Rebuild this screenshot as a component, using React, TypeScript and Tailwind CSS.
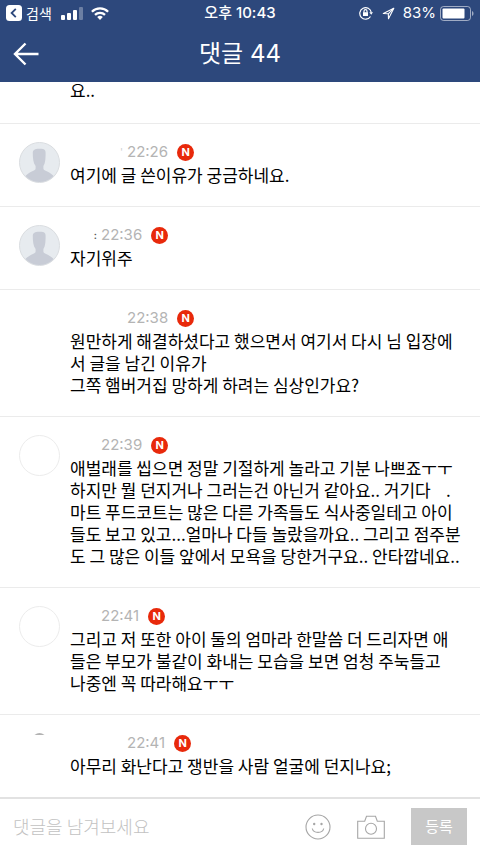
import React from "react";

type AvatarKind = "person" | "empty" | "none" | "edge";

interface Comment {
  id: number;
  avatar: AvatarKind;
  name?: string;
  wide: boolean;
  time: string;
  lines: string[];
}

const comments: Comment[] = [
  { id: 1, avatar: "person", name: "'", wide: true, time: "22:26", lines: ["여기에 글 쓴이유가 궁금하네요."] },
  { id: 2, avatar: "person", name: ":", wide: false, time: "22:36", lines: ["자기위주"] },
  {
    id: 3,
    avatar: "none",
    wide: true,
    time: "22:38",
    lines: ["원만하게 해결하셨다고 했으면서 여기서 다시 님 입장에", "서 글을 남긴 이유가", "그쪽 햄버거집 망하게 하려는 심상인가요?"],
  },
  {
    id: 4,
    avatar: "empty",
    wide: false,
    time: "22:39",
    lines: [
      "애벌래를 씹으면 정말 기절하게 놀라고 기분 나쁘죠ㅜㅜ",
      "하지만 뭘 던지거나 그러는건 아닌거 같아요.. 거기다    .",
      "마트 푸드코트는 많은 다른 가족들도 식사중일테고 아이",
      "들도 보고 있고...얼마나 다들 놀랐을까요.. 그리고 점주분",
      "도 그 많은 이들 앞에서 모욕을 당한거구요.. 안타깝네요..",
    ],
  },
  {
    id: 5,
    avatar: "empty",
    wide: false,
    time: "22:41",
    lines: ["그리고 저 또한 아이 둘의 엄마라 한말씀 더 드리자면 애", "들은 부모가 불같이 화내는 모습을 보면 엄청 주눅들고", "나중엔 꼭 따라해요ㅜㅜ"],
  },
  { id: 6, avatar: "edge", wide: true, time: "22:41", lines: ["아무리 화난다고 쟁반을 사람 얼굴에 던지나요;"] },
];

function Avatar({ kind }: { kind: AvatarKind }) {
  return (
    <div className="h-[41px] w-[41px] shrink-0">
      {kind === "person" && (
        <svg viewBox="0 0 41 41" className="h-full w-full">
          <circle cx="20.5" cy="20.5" r="20" fill="#e7ebef" stroke="#dadde0" />
          <path
            d="M13.800 11C13.800 8 16 6.800 20 6.800s6.600.2 6.600 4.200c0 5-.1 10-2.200 13v2.500c0 1 .8 1.600 2.200 2.300 3 1.400 6 3 8 5.200A19.500 19.500 0 0 1 6.400 34c2-2.200 5-3.800 8-5.200 1.400-.7 2.200-1.300 2.200-2.300V24c-2.400-3-2.800-8-2.800-13z"
            fill="#c8ccd6"
          />
        </svg>
      )}
      {kind === "empty" && <div className="h-full w-full rounded-full border border-[#ececec]" />}
      {kind === "edge" && (
        <svg viewBox="0 0 41 41" className="h-full w-full">
          <path d="M15.500 1.500q5-2 10 0z" fill="#666" />
        </svg>
      )}
    </div>
  );
}

function NewBadge() {
  return (
    <span className="flex h-[17px] w-[17px] items-center justify-center rounded-full bg-[#e8290b] text-[11px] leading-none font-bold text-white">
      N
    </span>
  );
}

function CommentRow({ comment }: { comment: Comment }) {
  return (
    <li className="border-t border-[#ebebeb] pt-[18px] pr-3 pb-5 pl-[19px]">
      <article className="flex gap-[10px]">
        <Avatar kind={comment.avatar} />
        <div className="min-w-0 flex-1">
          <div className="flex h-5 items-center font-['Inter',sans-serif] text-[15px] text-[#b4b4b4]">
            <span
              className={
                comment.wide
                  ? "w-[57px] pr-1 text-right text-[10px] text-[#d0d0d0]"
                  : "w-[31px] pr-1 text-right text-[10px] font-semibold text-[#555]"
              }
            >
              {comment.name}
            </span>
            <time className="mr-[9px]">{comment.time}</time>
            <NewBadge />
          </div>
          <p className="mt-[2px] text-[17px] leading-[22px] whitespace-pre text-black">{comment.lines.join("\n")}</p>
        </div>
      </article>
    </li>
  );
}

function StatusBar() {
  return (
    <div className="grid h-[26px] grid-cols-[1fr_auto_1fr] items-center px-[6px] font-['Inter','Noto_Sans_CJK_KR',sans-serif] text-[15px]">
      <div className="flex items-center">
        <svg viewBox="0 0 16 16" className="h-4 w-4">
          <rect width="16" height="16" rx="3.500" fill="#fff" />
          <path d="M9.800 3.800 5.600 8l4.200 4.200" fill="none" stroke="#2d487c" strokeWidth="1.800" />
        </svg>
        <span className="ml-1 text-[14px]">검색</span>
        <svg viewBox="0 0 22 13" className="ml-[9px] h-[13px] w-[22px]" fill="#fff">
          <rect x="0" y="8" width="4" height="5" rx="1" />
          <rect x="6" y="6" width="4" height="7" rx="1" />
          <rect x="12" y="3" width="4" height="10" rx="1" />
          <rect x="18" y="0" width="4" height="13" rx="1" opacity=".3" />
        </svg>
        <svg viewBox="0 0 18 13" className="ml-2 h-[13px] w-[18px]" fill="none" stroke="#fff" strokeWidth="2.300">
          <path d="M.9 4.700a11.500 11.500 0 0 1 16.200 0" />
          <path d="M4 7.900a7.100 7.100 0 0 1 10 0" />
          <path d="m9 13-2.800-2.900a4 4 0 0 1 5.600 0z" fill="#fff" stroke="none" />
        </svg>
      </div>
      <span className="font-medium">오후 10:43</span>
      <div className="flex items-center justify-end">
        <svg viewBox="0 0 14 14" className="h-[14px] w-[14px]" fill="none" stroke="#fff" strokeWidth="1.200">
          <path d="M11.500 10.500A5.800 5.800 0 1 1 12.300 6.500" />
          <path d="M10.300 6.200h3.700l-1.800 2.500z" fill="#fff" stroke="none" />
          <rect x="4" y="6.200" width="5" height="3.800" fill="#fff" stroke="none" />
          <path d="M5 6.500V5.200a1.500 1.500 0 0 1 3 0v1.300" />
        </svg>
        <svg viewBox="0 0 13 13" className="ml-[9px] h-[13px] w-[13px]" fill="none" stroke="#fff" strokeWidth="1.100">
          <path d="M11.800 1.200 1.300 6.500l5 .3.200 5z" strokeLinejoin="round" />
          <path d="m6.300 6.800 5.500-5.600" />
        </svg>
        <span className="ml-2">83%</span>
        <svg viewBox="0 0 34 15" className="ml-1 h-[15px] w-[34px]">
          <rect x=".5" y=".5" width="30" height="14" rx="3" fill="none" stroke="#fff" opacity=".55" />
          <rect x="2.500" y="2.500" width="22" height="10" rx="1" fill="#fff" />
          <path d="M32 5c2 .8 2 4.200 0 5z" fill="#fff" opacity=".55" />
        </svg>
      </div>
    </div>
  );
}

export default function App() {
  return (
    <div className="flex h-screen flex-col bg-white font-['Noto_Sans_CJK_KR',sans-serif]">
      <header className="shrink-0 bg-[#2d487c] text-white">
        <StatusBar />
        <div className="grid h-14 grid-cols-[1fr_auto_1fr] items-center px-[13px]">
          <button type="button" aria-label="뒤로" className="h-6 w-[27px]">
            <svg viewBox="0 0 27 24" className="h-full w-full" fill="none" stroke="#fff" strokeWidth="2.400">
              <path d="M12.500 1.500 2 12l10.500 10.500M2 12h23.500" />
            </svg>
          </button>
          <h1 className="font-['Inter','Noto_Sans_CJK_KR',sans-serif] text-[24px] leading-8 font-normal">댓글 44</h1>
        </div>
      </header>

      <main className="flex min-h-0 flex-1 flex-col justify-end overflow-hidden">
        <p className="shrink-0 pb-[22px] pl-[70px] text-[17px] leading-[22px] text-black">요..</p>
        <ul className="shrink-0">
          {comments.map((comment) => (
            <CommentRow key={comment.id} comment={comment} />
          ))}
        </ul>
      </main>

      <form
        className="flex h-[57px] shrink-0 items-center border-t-2 border-[#e2e2e2] px-[13px]"
        onSubmit={(event) => event.preventDefault()}
      >
        <input
          type="text"
          aria-label="댓글"
          placeholder="댓글을 남겨보세요"
          className="min-w-0 flex-1 text-[18px] font-light outline-none placeholder:text-[#c2c2c2]"
        />
        <button type="button" aria-label="이모티콘" className="h-[26px] w-[26px]">
          <svg viewBox="0 0 26 26" className="h-full w-full" fill="none" stroke="#a6a6a6" strokeWidth="1.100">
            <circle cx="13" cy="13" r="12" />
            <path d="M7.300 14.500c1 5.200 10.400 5.200 11.400 0" />
            <circle cx="9.200" cy="10" r="1.200" fill="#a6a6a6" stroke="none" />
            <circle cx="16.500" cy="10" r="1.200" fill="#a6a6a6" stroke="none" />
          </svg>
        </button>
        <button type="button" aria-label="사진" className="ml-[26px] h-6 w-7">
          <svg viewBox="0 0 28 24" className="h-full w-full" fill="none" stroke="#a6a6a6" strokeWidth="1.100">
            <path d="M.7 6.300h7l1.800-5h9l1.800 5h7v17H.7z" />
            <circle cx="14" cy="13.800" r="5.500" />
          </svg>
        </button>
        <button type="submit" className="ml-[26px] h-[37px] w-14 bg-[#c8c8c8] text-[15px] text-white">
          등록
        </button>
      </form>
    </div>
  );
}
